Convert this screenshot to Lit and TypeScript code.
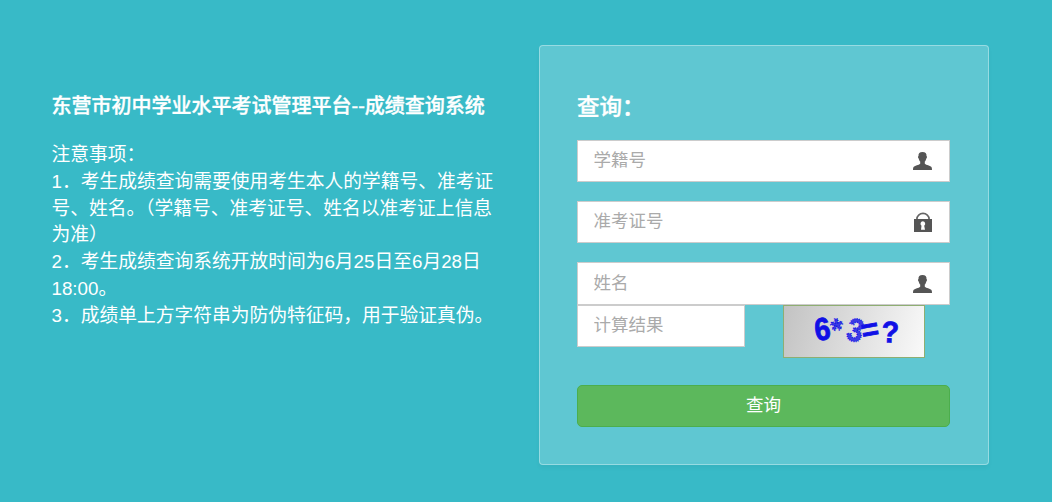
import { LitElement, html, css, svg } from 'lit';
import { customElement, property } from 'lit/decorators.js';

const icons = {
  user: svg`
    <path
      d="M9.5 0C6.6 0 5.3 1.4 5.5 4C4.7 4.2 4.9 6 5.7 6.4C6 8 6.7 9 7.2 9.6V11.8C5.6 13.2 2.1 13.5.8 14.8C.2 15.5 0 16.6 0 18H19C19 16.6 18.8 15.5 18.2 14.8C16.9 13.5 13.4 13.2 11.8 11.8V9.6C12.3 9 13 8 13.3 6.4C14.1 6 14.3 4.2 13.5 4C13.7 1.4 12.4 0 9.5 0Z"
    />
  `,
  lock: svg`
    <path
      fill="none"
      stroke="#666"
      stroke-width="1.7"
      d="M3.9 8V7A6.1 5.6 0 0 1 16.1 7V8"
    />
    <path
      fill-rule="evenodd"
      d="M1 7H19V20H1ZM9.8 9.3A2.5 2.5 0 0 0 8.5 13.8L8 17.8H12L11.2 13.8A2.5 2.5 0 0 0 9.8 9.3Z"
    />
  `,
};

/**
 * @element query-field
 *
 * @attr {String} label Placeholder of the input
 * @attr {String} icon 'user' or 'lock', nothing is drawn when missing
 */
@customElement('query-field')
export class QueryField extends LitElement {
  static styles = css`
    :host {
      display: block;
      height: 42px;
    }
    .field {
      display: flex;
      align-items: center;
      box-sizing: border-box;
      height: 100%;
      padding: 0 16px 0 15.5px;
      border: 1px solid #ccc;
      background: #fff;
    }
    input {
      flex: 1;
      min-width: 0;
      height: 38px;
      padding: 0 0 1px;
      box-sizing: border-box;
      border: 0;
      outline: 0;
      background: transparent;
      color: #333;
      font: 17.5px 'Liberation Sans', 'Noto Sans CJK SC', sans-serif;
    }
    input::placeholder {
      color: #aaa;
    }
    svg {
      width: 20px;
      height: 20px;
      fill: #555;
    }
    .user {
      margin-top: 2px;
    }
  `;

  @property() label = '';

  @property() icon?: 'user' | 'lock';

  render() {
    return html`
      <div class="field">
        <input type="text" placeholder=${this.label} />
        ${this.icon
          ? html`<svg class=${this.icon} viewBox="0 0 20 20">
              ${icons[this.icon]}
            </svg>`
          : ''}
      </div>
    `;
  }
}

@customElement('app-root')
export class AppRoot extends LitElement {
  static styles = css`
    :host {
      display: grid;
      grid-template-columns: 450px 450px;
      column-gap: 37.5px;
      align-items: start;
      box-sizing: border-box;
      width: 100%;
      height: 502px;
      padding: 45px 0 0 51.5px;
      overflow: hidden;
      background: #38bac7;
      color: #fff;
      font-family: 'Liberation Sans', 'Noto Sans CJK SC', sans-serif;
    }
    h1,
    h2,
    p {
      margin: 0;
    }
    .notice {
      padding-top: 46px;
    }
    h1,
    h2 {
      font-weight: 500;
      -webkit-text-stroke: 0.35px #fff;
    }
    h1 {
      margin-bottom: 21px;
      font-size: 20px;
      line-height: 30px;
    }
    .notice p {
      font-size: 18.75px;
      line-height: 26.8px;
    }
    .panel {
      box-sizing: border-box;
      height: 420px;
      padding: 46px 38px 0 37px;
      border: 1px solid rgba(255, 255, 255, 0.35);
      border-radius: 4px;
      background: rgba(255, 255, 255, 0.2);
      box-shadow: 0 3px 4px rgba(0, 0, 0, 0.04);
    }
    h2 {
      margin-bottom: 16px;
      font-size: 22.5px;
      line-height: 32px;
    }
    .fields {
      display: grid;
      row-gap: 19px;
    }
    .fields query-field:last-child {
      height: 43px;
    }
    .check {
      display: flex;
      justify-content: space-between;
      align-items: flex-start;
      height: 80px;
      padding-right: 25px;
    }
    .check query-field {
      width: 168px;
    }
    .captcha {
      box-sizing: border-box;
      width: 142px;
      height: 53px;
      border: 1px solid #8fae72;
      background: linear-gradient(105deg, #c2c2c2, #fafafa) border-box;
    }
    .captcha text {
      fill: #1010e6;
      stroke: #1010e6;
      font-weight: bold;
    }
    .captcha .broken {
      fill: #1010e6cc;
      stroke: #1010e6;
      stroke-width: 1.4;
      stroke-dasharray: 1 1.2;
    }
    button {
      display: block;
      width: 100%;
      height: 42px;
      padding: 0 0 5px;
      border: 1px solid #4cae4c;
      border-radius: 5px;
      background: #5cb85c;
      color: #fff;
      font: 17.5px 'Liberation Sans', 'Noto Sans CJK SC', sans-serif;
    }
  `;

  render() {
    return html`
      <section class="notice">
        <h1>东营市初中学业水平考试管理平台--成绩查询系统</h1>
        <p>注意事项：</p>
        <p>
          1．考生成绩查询需要使用考生本人的学籍号、准考证号、姓名。（学籍号、准考证号、姓名以准考证上信息为准）
        </p>
        <p>2．考生成绩查询系统开放时间为6月25日至6月28日18:00。</p>
        <p>3．成绩单上方字符串为防伪特征码，用于验证真伪。</p>
      </section>
      <section class="panel">
        <h2>查询：</h2>
        <div class="fields">
          <query-field label="学籍号" icon="user"></query-field>
          <query-field label="准考证号" icon="lock"></query-field>
          <query-field label="姓名" icon="user"></query-field>
        </div>
        <div class="check">
          <query-field label="计算结果"></query-field>
          ${this._captcha()}
        </div>
        <button type="button">查询</button>
      </section>
    `;
  }

  _captcha() {
    return html`
      <svg class="captcha" viewBox="0 0 140 51">
        <g font-family="Liberation Sans" font-size="30" stroke-width="0.8">
          <text transform="translate(32 35) rotate(-8) scale(.95 1.06)">6</text>
          <text class="broken" transform="translate(48 34) rotate(-5)">*</text>
          <text
            class="broken"
            transform="translate(61 33) rotate(14) scale(.95 1.08)"
          >
            3
          </text>
          <text transform="translate(79 35) rotate(-10)">=</text>
          <text transform="translate(97 36) rotate(3) scale(.95 1)">?</text>
        </g>
      </svg>
    `;
  }
}
